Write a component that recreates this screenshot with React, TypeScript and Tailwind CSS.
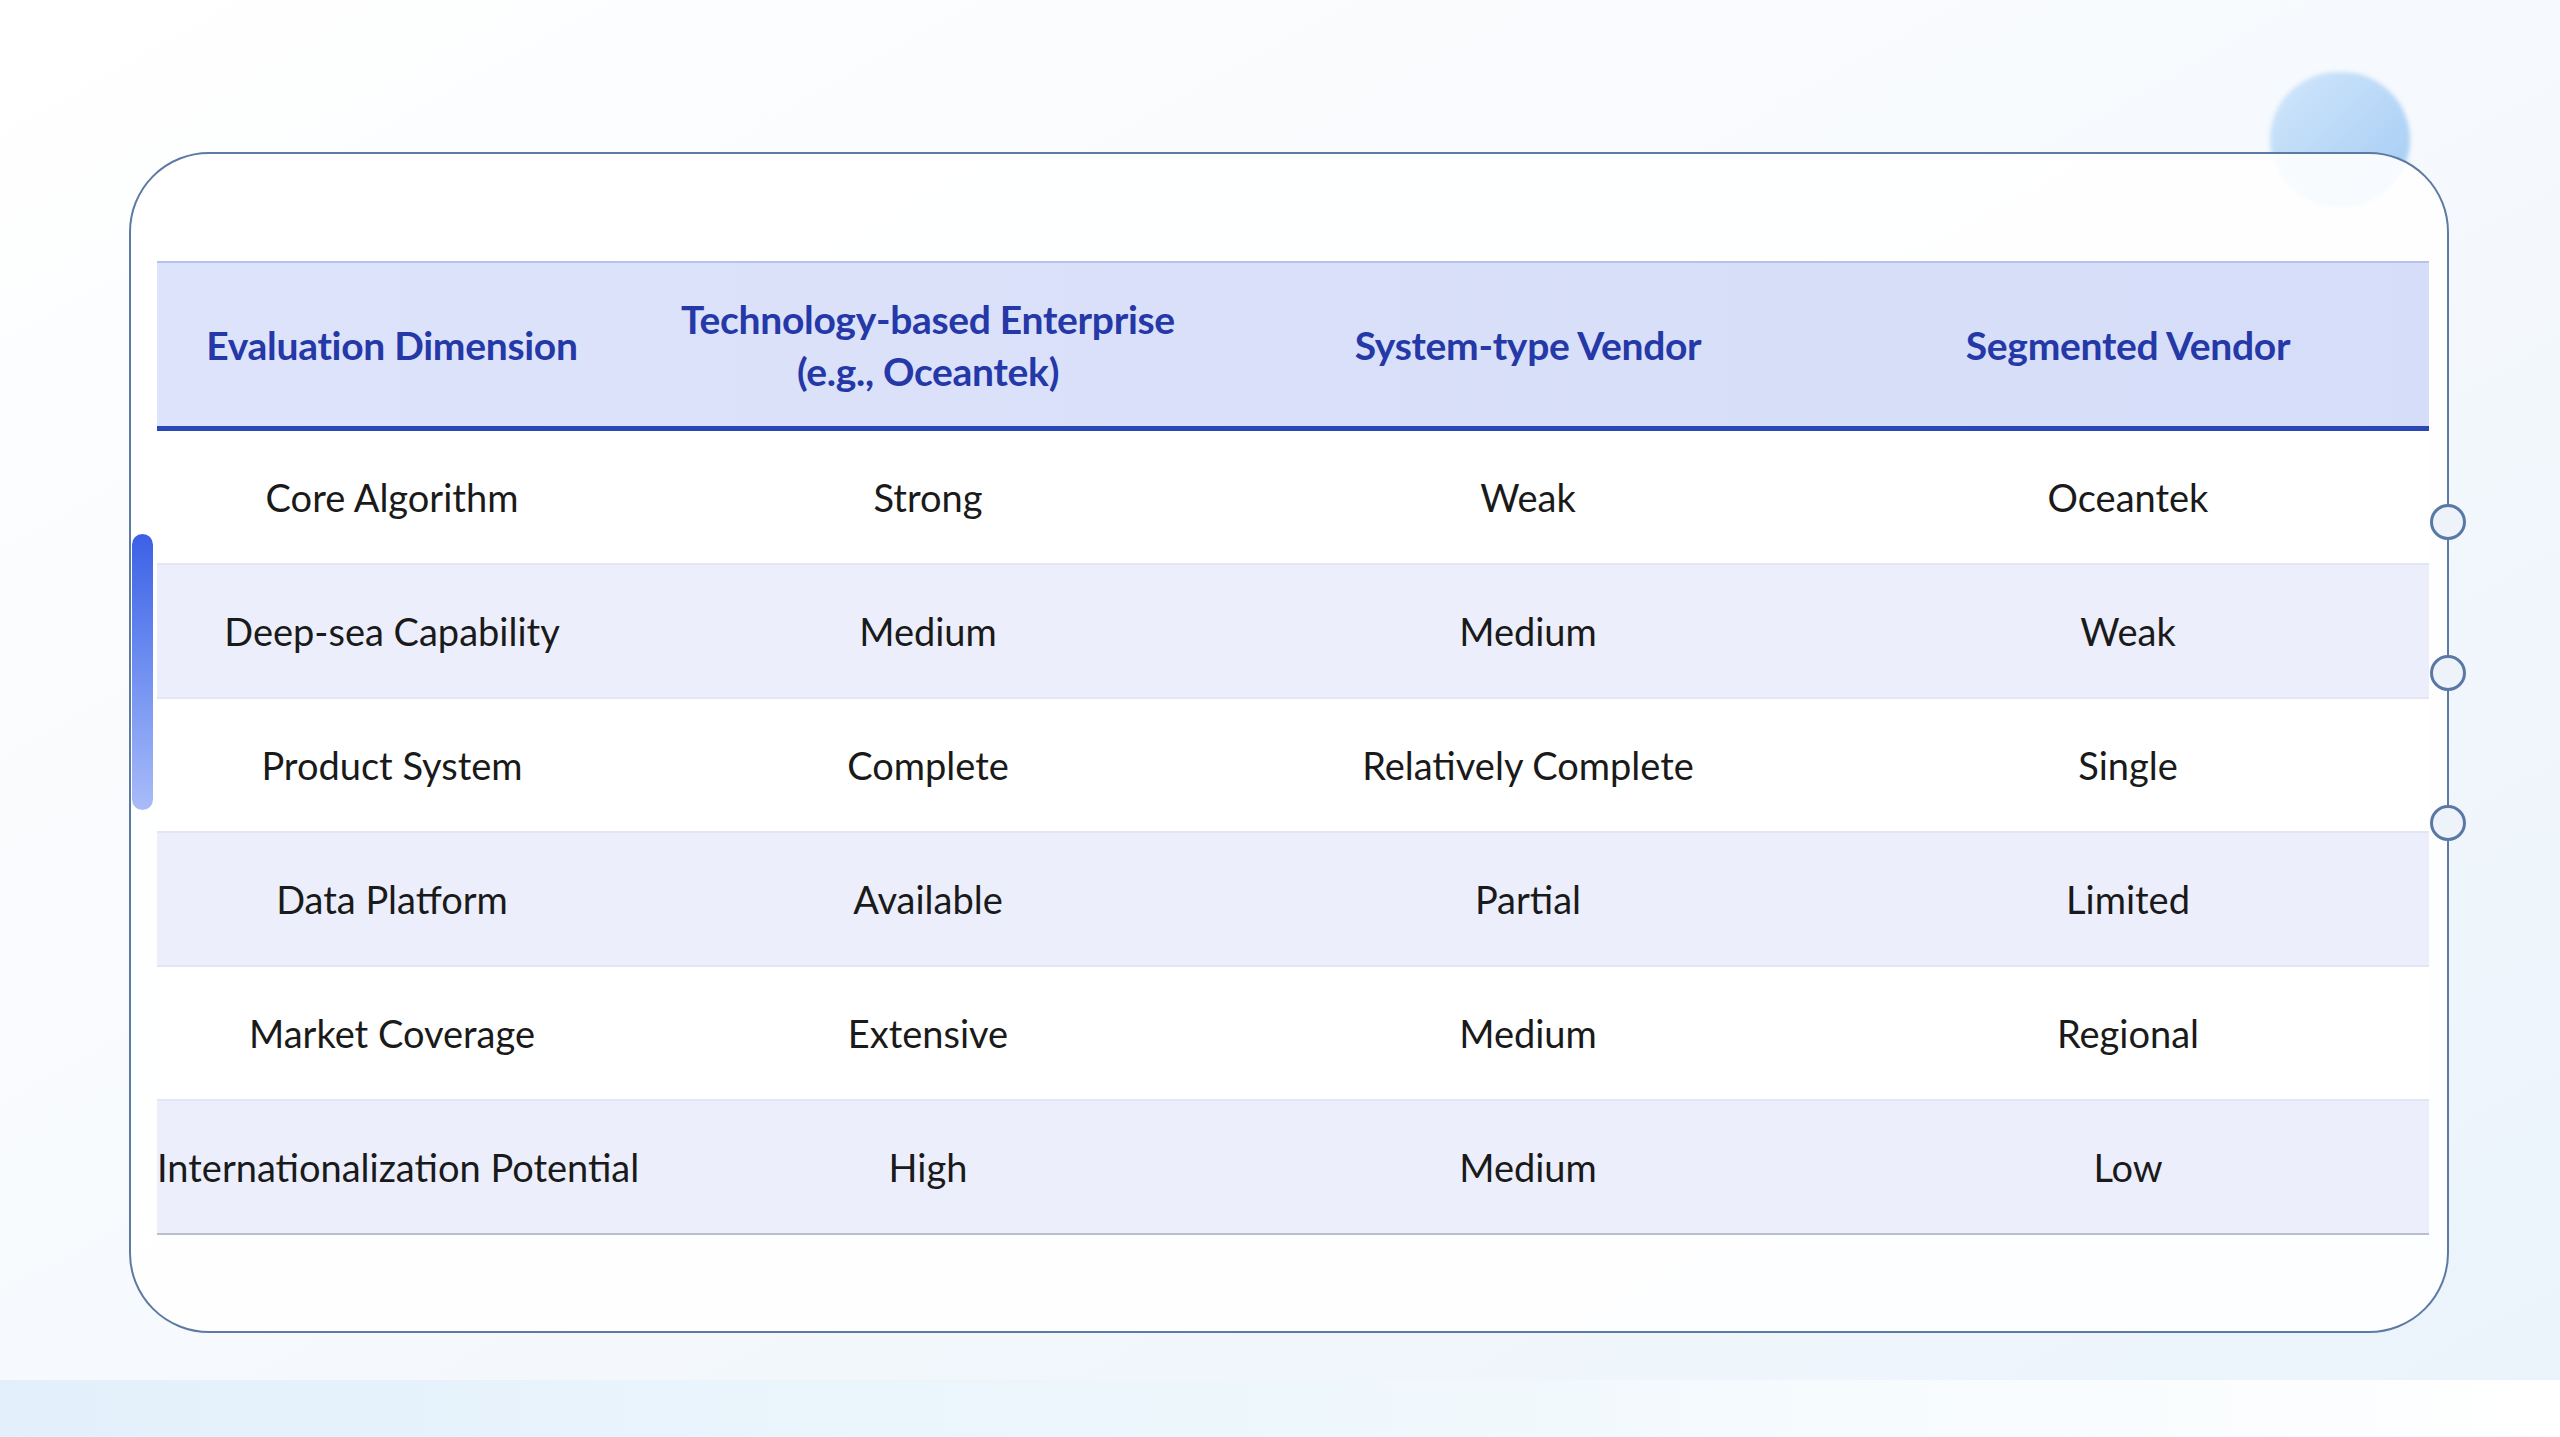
export default function App() {
  const rows = [
    ["Core Algorithm", "Strong", "Weak", "Oceantek"],
    ["Deep-sea Capability", "Medium", "Medium", "Weak"],
    ["Product System", "Complete", "Relatively Complete", "Single"],
    ["Data Platform", "Available", "Partial", "Limited"],
    ["Market Coverage", "Extensive", "Medium", "Regional"],
    ["Internationalization Potential", "High", "Medium", "Low"],
  ];
  const cols = "grid grid-cols-[470px_602px_598px_1fr]";
  return (
    <div className="relative w-[2560px] h-[1437px] overflow-hidden bg-gradient-to-br from-[#ffffff] via-[#f6f9fd] to-[#eaf3fb]" style={{ fontFamily: 'Lato, "Noto Sans", sans-serif' }}>
      <div className="absolute left-0 right-0 top-[1380px] h-[57px] bg-gradient-to-r from-[#e3f0fb] via-[#eef7fc] to-[#ffffff]" />
      <div className="absolute left-[2270px] top-[72px] w-[140px] h-[135px] rounded-full bg-gradient-to-br from-[#c9e2fb] to-[#8ec0f2] opacity-80 blur-[2px]" />
      <div className="absolute left-[129px] top-[152px] w-[2320px] h-[1181px] rounded-[80px] border-2 border-[#5d7aa3] bg-white/90 pt-[107px] pl-[26px] pr-[20px]">
        <div className="w-[2272px]">
          <div className={`${cols} h-[170px] items-center bg-gradient-to-r from-[#dde3fa] to-[#d6ddf8] border-t-2 border-[#b7c2ec] border-b-[5px] border-b-[#2a47b6] text-[#2538a8] font-bold text-[39px] leading-[52px] text-center whitespace-nowrap`}>
            <div className="tracking-[-0.3px]">Evaluation Dimension</div>
            <div className="tracking-[-0.3px]">Technology-based Enterprise<br />(e.g., Oceantek)</div>
            <div className="tracking-[-0.3px]">System-type Vendor</div>
            <div className="tracking-[-0.3px]">Segmented Vendor</div>
          </div>
          {rows.map((r, i) => (
            <div key={i} className={`${cols} h-[134px] items-center text-center text-[38px] text-[#1a1a1a] whitespace-nowrap ${i % 2 === 1 ? "bg-[#eceffb]" : "bg-white"} border-b-2 ${i === 5 ? "border-[#b9bfd0]" : "border-[#e3e6f2]"}`}>
              {r.map((c, j) => <div key={j}>{c}</div>)}
            </div>
          ))}
        </div>
      </div>
      <div className="absolute left-[132px] top-[534px] w-[21px] h-[276px] rounded-full bg-gradient-to-b from-[#3d5fe6] to-[#a9bcf8]" />
      {[522, 673, 823].map((t) => (
        <div key={t} className="absolute left-[2430px] w-[36px] h-[36px] rounded-full border-[3px] border-[#5a78a6] bg-[#eef3f9]" style={{ top: t - 18 }} />
      ))}
    </div>
  );
}
